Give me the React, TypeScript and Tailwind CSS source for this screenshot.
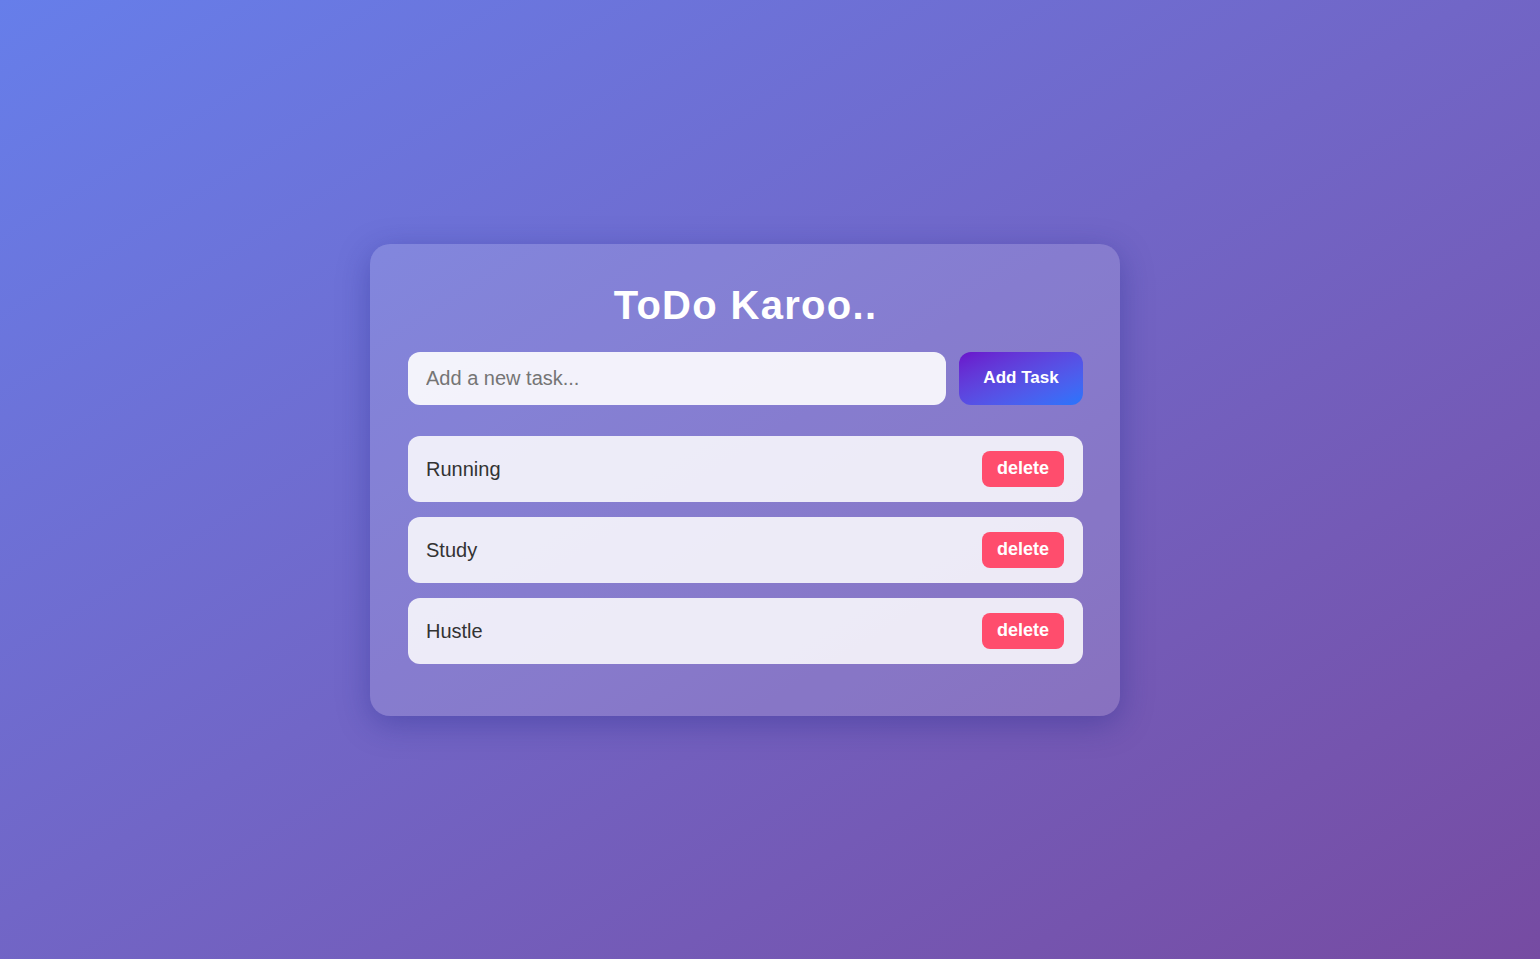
import React, { useState } from 'react'

const App = () => {
  const [tasks, setTasks] = useState<string[]>(['Running', 'Study', 'Hustle'])
  const [text, setText] = useState('')

  const addTask = () => {
    if (!text.trim()) return
    setTasks([...tasks, text.trim()])
    setText('')
  }

  return (
    <div className="flex min-h-screen items-center justify-center bg-gradient-to-br from-[#667eea] to-[#764ba2] pr-[50px] font-['Liberation_Sans',Arial,sans-serif]">
      <div className="w-[750px] rounded-[20px] bg-white/15 pb-[52px] pl-[38px] pr-[37px] pt-[37px] shadow-[0_8px_32px_rgba(31,38,135,0.37)]">
        <h1 className="mb-[23px] text-center text-[40px] font-bold leading-[48px] tracking-[1.3px] text-white">
          ToDo Karoo..
        </h1>
        <div className="mb-[31px] flex gap-[13px]">
          <input
            value={text}
            onChange={(e) => setText(e.target.value)}
            placeholder="Add a new task..."
            className="h-[53px] flex-1 rounded-[12px] bg-white/90 px-[18px] text-[20px] text-[#333] outline-none placeholder:text-[#757575]"
          />
          <button
            onClick={addTask}
            className="h-[53px] w-[124px] rounded-[12px] bg-gradient-to-br from-[#6a11cb] to-[#2575fc] text-[17px] font-bold text-white"
          >
            Add Task
          </button>
        </div>
        <ul className="flex flex-col gap-[15px]">
          {tasks.map((task, i) => (
            <li
              key={i}
              className="flex h-[66px] items-center justify-between rounded-[12px] bg-white/85 pl-[18px] pr-[19px]"
            >
              <span className="text-[20px] text-[#333]">{task}</span>
              <button
                onClick={() => setTasks(tasks.filter((_, j) => j !== i))}
                className="h-[36px] w-[82px] rounded-[8px] bg-[#ff4d6d] text-[18px] font-bold text-white"
              >
                delete
              </button>
            </li>
          ))}
        </ul>
      </div>
    </div>
  )
}

export default App
